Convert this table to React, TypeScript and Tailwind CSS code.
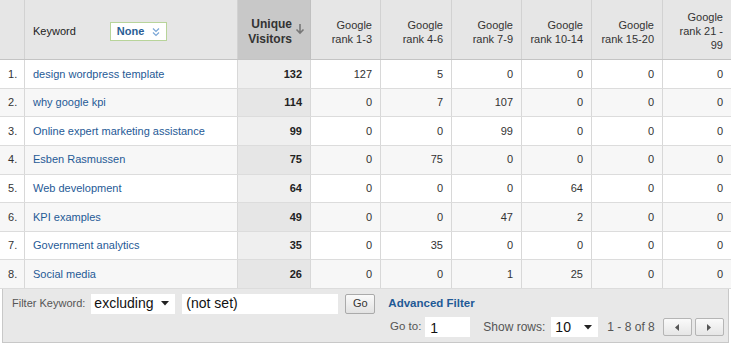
import React from "react";

const rows = [
  ["design wordpress template", 132, 127, 5, 0, 0, 0, 0],
  ["why google kpi", 114, 0, 7, 107, 0, 0, 0],
  ["Online expert marketing assistance", 99, 0, 0, 99, 0, 0, 0],
  ["Esben Rasmussen", 75, 0, 75, 0, 0, 0, 0],
  ["Web development", 64, 0, 0, 0, 64, 0, 0],
  ["KPI examples", 49, 0, 0, 47, 2, 0, 0],
  ["Government analytics", 35, 0, 35, 0, 0, 0, 0],
  ["Social media", 26, 0, 0, 1, 25, 0, 0],
];

const cols = "grid-cols-[25px_213px_73px_70px_71px_70px_70px_71px_68px]";

export default function App() {
  return (
    <div className="w-[731px] h-[347px] bg-white text-[11px] text-[#333]" style={{ fontFamily: '"Liberation Sans", Arial, sans-serif' }}>
      <div className={`grid ${cols} h-[60px] bg-[#e6e6e6] border-b border-[#c4c4c4]`}>
        <div className="border-r border-[#d2d2d2]" />
        <div className="border-r border-[#d2d2d2] flex items-center pl-[8px] pt-[4px]">
          <span className="text-[11px] text-[#222]">Keyword</span>
          <div className="ml-[34px] w-[57px] h-[19px] bg-white border border-[#b8d49a] flex items-center justify-between pl-[6px] pr-[4px]">
            <span className="font-bold text-[#2a5e95] text-[11px]">None</span>
            <svg width="10" height="12" viewBox="0 0 10 12" className="mr-[1px]">
              <path d="M2 2.5 L5 5.5 L8 2.5" fill="none" stroke="#7aa6d6" strokeWidth="1.2" />
              <path d="M2 6.5 L5 9.5 L8 6.5" fill="none" stroke="#7aa6d6" strokeWidth="1.2" />
            </svg>
          </div>
        </div>
        <div className="bg-[#c8c8c8] border-r border-[#c0c0c0] flex items-center justify-end pr-[5px] pt-[4px]">
          <div className="text-right font-bold text-[12px] leading-[15px] text-[#333]">Unique<br />Visitors</div>
          <svg width="10" height="12" viewBox="0 0 10 12" className="ml-[3px] mb-[6px]">
            <path d="M5 1 V10 M1.5 6.5 L5 10 L8.5 6.5" fill="none" stroke="#777" strokeWidth="1.6" />
          </svg>
        </div>
        {["rank 1-3", "rank 4-6", "rank 7-9", "rank 10-14", "rank 15-20"].map((r) => (
          <div key={r} className="border-r border-[#d2d2d2] flex items-center justify-end pr-[8px] pt-[4px]">
            <div className="text-right leading-[14px] text-[#333]">Google<br />{r}</div>
          </div>
        ))}
        <div className="flex items-center justify-end pr-[8px] pt-[2px]">
          <div className="text-right leading-[14px] text-[#333]">Google<br />rank 21 -<br />99</div>
        </div>
      </div>
      {rows.map((r, i) => (
        <div key={i} className={`grid ${cols} h-[28.625px] border-b border-[#dcdcdc] ${i % 2 === 1 ? "bg-[#f7f7f7]" : "bg-white"}`}>
          <div className="border-r border-[#d8d8d8] flex items-center pl-[8px] text-[#333]">{i + 1}.</div>
          <div className="border-r border-[#d8d8d8] flex items-center pl-[8px] text-[#1f5a96]">{r[0]}</div>
          <div className={`border-r border-[#d8d8d8] flex items-center justify-end pr-[8px] font-bold text-[#222] ${i % 2 === 1 ? "bg-[#e6e6e6]" : "bg-[#efefef]"}`}>{r[1]}</div>
          {(r.slice(2) as number[]).map((v, j) => (
            <div key={j} className={`flex items-center justify-end pr-[8px] text-[#333] ${j < 5 ? "border-r border-[#d8d8d8]" : ""}`}>{v}</div>
          ))}
        </div>
      ))}
      <div className="mx-[2px] h-[54px] bg-[#e8e8e8] border border-t-0 border-[#c8c8c8] relative">
        <div className="flex items-center h-[26px] pt-[3px]">
          <span className="ml-[9px] text-[#555] text-[11px]">Filter Keyword:</span>
          <div className="ml-[6px] w-[84px] h-[20px] bg-white flex items-center justify-between pl-[3px] pr-[6px]">
            <span className="text-[14px] text-[#111]">excluding</span>
            <svg width="8" height="5" viewBox="0 0 8 5"><path d="M0 0 H8 L4 4.5 Z" fill="#222" /></svg>
          </div>
          <div className="ml-[7px] w-[156px] h-[20px] bg-white flex items-center pl-[4px]">
            <span className="text-[14px] text-[#111]">(not set)</span>
          </div>
          <div className="ml-[7px] w-[30px] h-[20px] border border-[#aaa] rounded-[2px] bg-gradient-to-b from-[#fafafa] to-[#e2e2e2] flex items-center justify-center text-[#333] text-[11px]">Go</div>
          <span className="ml-[13px] font-bold text-[#1f5a96] text-[11.5px]">Advanced Filter</span>
        </div>
        <div className="flex items-center h-[24px] pl-[387px]">
          <span className="text-[#555] text-[11.5px]">Go to:</span>
          <div className="ml-[4px] w-[45px] h-[20px] bg-white flex items-end pl-[5px] pb-[1px]">
            <span className="text-[14px] text-[#111] leading-[16px]">1</span>
          </div>
          <span className="ml-[13px] text-[#555] text-[12px]">Show rows:</span>
          <div className="ml-[6px] w-[47px] h-[20px] bg-white flex items-center justify-between pl-[4px] pr-[6px]">
            <span className="text-[14px] text-[#111]">10</span>
            <svg width="8" height="5" viewBox="0 0 8 5"><path d="M0 0 H8 L4 4.5 Z" fill="#222" /></svg>
          </div>
          <span className="ml-[9px] text-[#555] text-[12px]">1 - 8 of 8</span>
          <div className="ml-[8px] w-[29px] h-[18px] border border-[#b5b5b5] rounded-[2px] bg-gradient-to-b from-[#fafafa] to-[#e6e6e6] flex items-center justify-center">
            <svg width="4" height="7" viewBox="0 0 4 7"><path d="M4 0 V7 L0 3.5 Z" fill="#555" /></svg>
          </div>
          <div className="ml-[3px] w-[29px] h-[18px] border border-[#b5b5b5] rounded-[2px] bg-gradient-to-b from-[#fafafa] to-[#e6e6e6] flex items-center justify-center">
            <svg width="4" height="7" viewBox="0 0 4 7"><path d="M0 0 V7 L4 3.5 Z" fill="#555" /></svg>
          </div>
        </div>
      </div>
    </div>
  );
}
